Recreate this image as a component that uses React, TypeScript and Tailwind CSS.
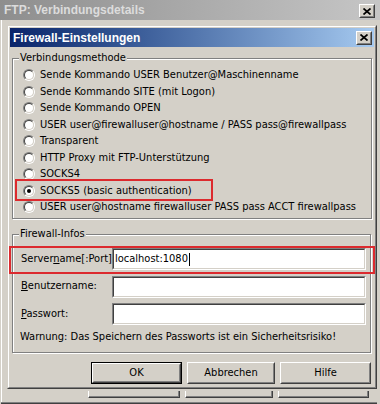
import React from "react";

const FONT = "font-['DejaVu_Sans_Condensed','Liberation_Sans',sans-serif]";

function CloseBtn() {
  return (
    <div className="w-[16px] h-[14px] border border-t-white border-l-white border-r-[#404040] border-b-[#404040] bg-[#d4d0c8]">
      <div className="w-full h-full border border-t-[#d4d0c8] border-l-[#d4d0c8] border-r-[#808080] border-b-[#808080] flex items-center justify-center">
        <svg width="8" height="7" viewBox="0 0 8 7">
          <path d="M0.5 0.5 L7.5 6.5 M7.5 0.5 L0.5 6.5" stroke="black" strokeWidth="1.7" />
        </svg>
      </div>
    </div>
  );
}

function Radio({ label, checked }: { label: string; checked?: boolean }) {
  return (
    <div className="h-[16.5px] flex items-center">
      <div className="w-[12px] h-[12px] rounded-full border border-t-[#808080] border-l-[#808080] border-r-white border-b-white shrink-0">
        <div className="w-full h-full rounded-full border border-t-[#404040] border-l-[#404040] border-r-[#d4d0c8] border-b-[#d4d0c8] bg-white flex items-center justify-center">
          {checked && <div className="w-[4px] h-[4px] rounded-full bg-black" />}
        </div>
      </div>
      <span className="ml-[5px] whitespace-nowrap">{label}</span>
    </div>
  );
}

function Input({ value, cursor }: { value?: string; cursor?: boolean }) {
  return (
    <div className="flex-1 h-[22px] border border-t-[#808080] border-l-[#808080] border-r-white border-b-white">
      <div className="w-full h-full border border-t-[#404040] border-l-[#404040] border-r-[#d4d0c8] border-b-[#d4d0c8] bg-white flex items-center pl-[1px]">
        {value && <span className="whitespace-nowrap">{value}</span>}
        {cursor && <div className="w-[1px] h-[13px] bg-black ml-[1px]" />}
      </div>
    </div>
  );
}

function Button({ label, w, def }: { label: string; w: string; def?: boolean }) {
  const inner = (
    <div className="w-full h-full border border-t-white border-l-white border-r-[#404040] border-b-[#404040]">
      <div className="w-full h-full border border-t-[#d4d0c8] border-l-[#d4d0c8] border-r-[#808080] border-b-[#808080] flex items-center justify-center">
        {label}
      </div>
    </div>
  );
  return (
    <div className={`${w} h-[22px] bg-[#d4d0c8] ${def ? "border border-black" : ""}`}>
      {inner}
    </div>
  );
}

function Group({ title, children, className }: { title: string; children: React.ReactNode; className?: string }) {
  return (
    <div className={`relative border border-[#808080] shadow-[inset_1px_1px_0_white,1px_1px_0_white] ${className ?? ""}`}>
      <span className="absolute left-[6px] top-[-8px] px-[1px] bg-[#d4d0c8] leading-[14px] whitespace-nowrap">
        {title}
      </span>
      {children}
    </div>
  );
}

export default function App() {
  return (
    <div className={`w-[380px] h-[404px] overflow-hidden bg-[#d4d0c8] relative ${FONT} text-[11px] text-black`}>
      <div className="flex flex-col h-full">
        {/* Outer (inactive) title bar */}
        <div className="h-[20px] shrink-0 flex items-center pl-[4px] pr-[5px] bg-linear-to-r from-[#8e8e8e] to-[#c6c6c6]">
          <span className="font-bold text-[#dcdcdc] text-[12px] font-['Liberation_Sans',sans-serif]">FTP: Verbindungsdetails</span>
          <div className="ml-auto mt-[2px]">
            <CloseBtn />
          </div>
        </div>
        {/* Outer content */}
        <div className="flex-1 border-l border-l-white ml-[1px] pl-[5px] pr-[3px] pt-[5px] flex flex-col">
          {/* Inner dialog */}
          <div className="w-[370px] h-[364px] shrink-0 border border-t-[#d4d0c8] border-l-[#d4d0c8] border-r-[#404040] border-b-[#404040]">
            <div className="w-full h-full border border-t-white border-l-white border-r-[#808080] border-b-[#808080] flex flex-col">
              <div className="h-[19px] mt-[1px] mx-[1px] shrink-0 flex items-center pl-[3px] pr-[2px] bg-linear-to-r from-[#0a246a] to-[#a6caf0]">
                <span className="font-bold text-white text-[12px] font-['Liberation_Sans',sans-serif]">Firewall-Einstellungen</span>
                <div className="ml-auto">
                  <CloseBtn />
                </div>
              </div>
              <div className="flex-1 flex flex-col px-[3px] pt-[11px]">
                <Group title="Verbindungsmethode" className="h-[161px] pl-[10px] pt-[8px]">
                  <Radio label="Sende Kommando USER Benutzer@Maschinenname" />
                  <Radio label="Sende Kommando SITE (mit Logon)" />
                  <Radio label="Sende Kommando OPEN" />
                  <Radio label="USER user@firewalluser@hostname / PASS pass@firewallpass" />
                  <Radio label="Transparent" />
                  <Radio label="HTTP Proxy mit FTP-Unterstützung" />
                  <Radio label="SOCKS4" />
                  <Radio label="SOCKS5 (basic authentication)" checked />
                  <Radio label="USER user@hostname firewalluser PASS pass ACCT firewallpass" />
                </Group>
                <Group title="Firewall-Infos" className="mt-[15px] h-[119px] pl-[8px] pr-[4px] pt-[13px] mr-[1px]">
                  <div className="flex flex-col gap-[5.5px]">
                    <div className="flex items-center">
                      <span className="w-[91px] whitespace-nowrap">
                        Server<u>n</u>ame[:Port]
                      </span>
                      <Input value="localhost:1080" cursor />
                    </div>
                    <div className="flex items-center">
                      <span className="w-[91px]">
                        <u>B</u>enutzername:
                      </span>
                      <Input />
                    </div>
                    <div className="flex items-center">
                      <span className="w-[91px]">
                        <u>P</u>asswort:
                      </span>
                      <Input />
                    </div>
                  </div>
                  <div className="mt-[4px] h-[16px] flex items-center whitespace-nowrap -ml-[1px]">
                    Warnung: Das Speichern des Passworts ist ein Sicherheitsrisiko!
                  </div>
                </Group>
                <div className="mt-[9px] flex justify-end gap-[5px] pr-[1px]">
                  <Button label="OK" w="w-[91px]" def />
                  <Button label="Abbrechen" w="w-[88px]" />
                  <Button label="Hilfe" w="w-[91px]" />
                </div>
              </div>
            </div>
          </div>
          {/* Outer window's buttons, partly hidden */}
          <div className="flex gap-[5px] pl-[81px] pt-[2px]">
            <div className="w-[92px] h-[7px] border-l border-l-white border-r border-r-[#404040] border-b border-b-[#404040] shadow-[inset_-1px_-1px_0_#808080]" />
            <div className="w-[88px] h-[7px] border-l border-l-white border-r border-r-[#404040] border-b border-b-[#404040] shadow-[inset_-1px_-1px_0_#808080]" />
            <div className="w-[91px] h-[7px] border-l border-l-white border-r border-r-[#404040] border-b border-b-[#404040] shadow-[inset_-1px_-1px_0_#808080]" />
          </div>
          <div className="mt-auto h-[2px] border-t border-t-[#808080] border-b border-b-[#404040] -ml-[6px]" />
        </div>
      </div>
      {/* Red annotation frames */}
      <div className="absolute left-[15px] top-[179px] w-[198px] h-[22px] border-2 border-[#dc2a2e]" />
      <div className="absolute left-[9px] top-[246px] w-[366px] h-[28px] border-2 border-[#dc2a2e]" />
    </div>
  );
}
